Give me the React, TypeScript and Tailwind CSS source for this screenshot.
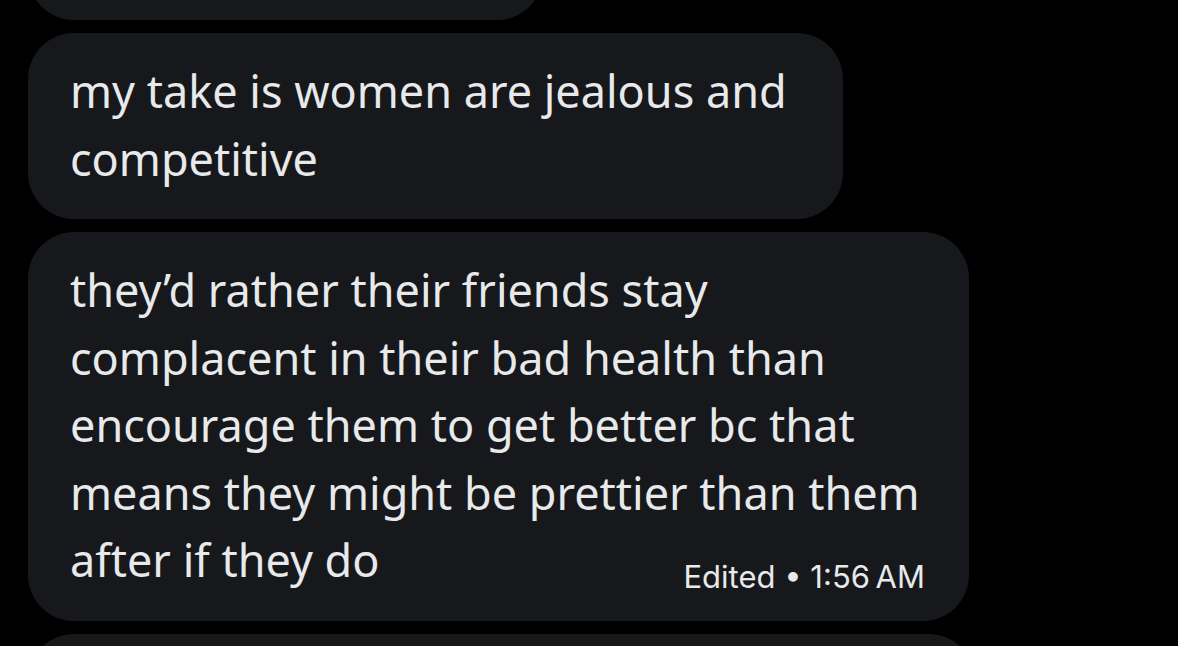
import React from "react";

const bubble = "bg-[#16181c] rounded-[46px] ml-[28px] shrink-0";
const body = "text-[45px] leading-[67.5px] whitespace-nowrap";

export default function App() {
  return (
    <div
      className="w-[1178px] h-[646px] overflow-hidden bg-black text-[#e7e9ea] flex flex-col gap-[13px]"
      style={{ fontFamily: "'Noto Sans', Roboto, sans-serif" }}
    >
      {/* earlier message, mostly scrolled out of view */}
      <div className={`${bubble} w-[515px] h-[100px] -mt-[80px]`} />

      <div className={`${bubble} w-[815px] pl-[42px] pr-[40px] pt-[24px] pb-[27px]`}>
        <p className={body}>
          my take is women are jealous and
          <br />
          competitive
        </p>
      </div>

      <div className={`${bubble} w-[941px] pl-[42px] pr-[44px] pt-[24px] pb-[27px]`}>
        <p className={body}>
          they’d rather their friends stay
          <br />
          complacent in their bad health than
          <br />
          encourage them to get better bc that
          <br />
          means they might be prettier than them
        </p>
        <div className="flex items-end justify-between">
          <p className={body}>after if they do</p>
          <span
            className="text-[31px] leading-[31px] whitespace-nowrap mb-[2px]"
            style={{ fontFamily: "Inter, Roboto, sans-serif" }}
          >
            Edited • 1:56&#8201;AM
          </span>
        </div>
      </div>

      {/* next message, cut off at the bottom */}
      <div className={`${bubble} w-[947px] h-[100px]`} />
    </div>
  );
}
